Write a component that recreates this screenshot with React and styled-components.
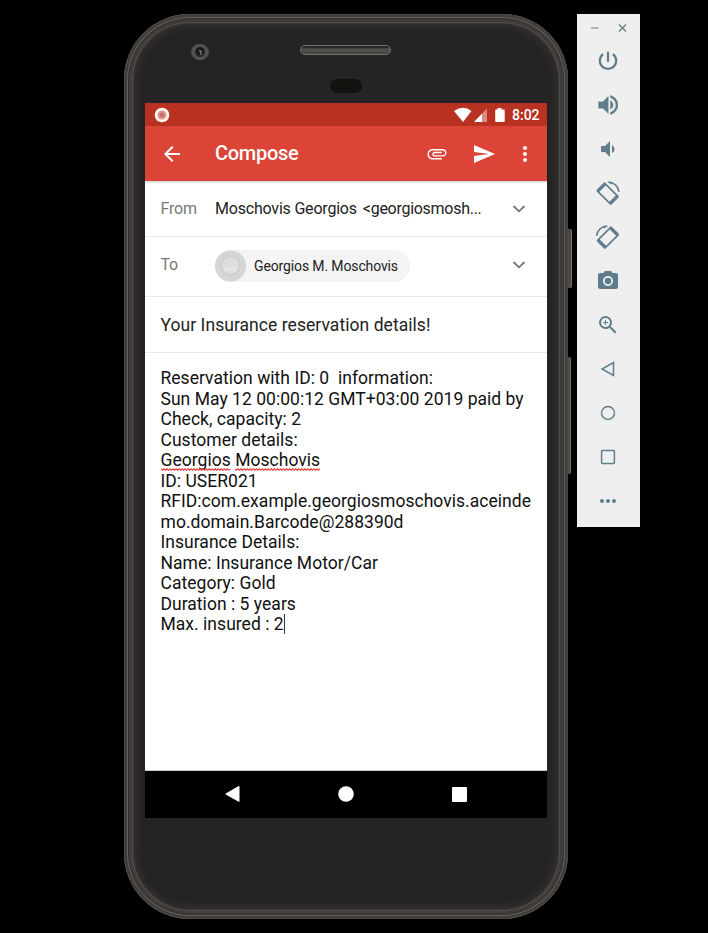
import React from "react";
import styled, { createGlobalStyle } from "styled-components";
import {
  MdVolumeDown,
  MdPhotoCamera,
  MdZoomIn,
  MdArrowBack,
  MdSend,
  MdMoreVert,
  MdMoreHoriz,
} from "react-icons/md";

const GlobalStyle = createGlobalStyle`
  * { box-sizing: border-box; }
  body { margin: 0; background: #000; font-family: Roboto, sans-serif; }
  svg { display: block; flex: none; }
`;

const Desktop = styled.main`
  display: flex;
  align-items: flex-start;
  width: 708px;
  height: 933px;
  padding: 14px 0 0 124px;
  background: #000;
  overflow: hidden;
`;

const Phone = styled.section`
  position: relative;
  display: flex;
  flex-direction: column;
  width: 444px;
  height: 905px;
  padding: 0 21px;
  border-radius: 66px;
  background: #252324;
  box-shadow:
    inset 0 0 0 1px #4a4845,
    inset 0 0 0 3px #3f3c39,
    inset 0 0 0 4px #66625e,
    inset 0 0 0 5px #33302e,
    inset 0 0 0 8px #3f3c3a,
    inset 0 0 0 9px #514e4b,
    inset 0 0 0 10px #383533,
    inset 0 0 8px 12px #353232;
`;

const SideKey = styled.span`
  position: absolute;
  left: ${(p) => p.$left}px;
  top: ${(p) => p.$top}px;
  width: ${(p) => p.$width}px;
  height: ${(p) => p.$height}px;
  border-radius: 0 2px 2px 0;
  background: #4d4b49;
  border-right: 1px solid #777572;
`;

const Bezel = styled.div`
  display: grid;
  grid-template-columns: 110px 181px 111px;
  height: 89px;
`;

const CameraSlot = styled.div`
  display: flex;
  justify-content: center;
  padding-top: 29px;
`;

const SensorColumn = styled.div`
  display: flex;
  flex-direction: column;
  align-items: center;
  gap: 24px;
  padding-top: 31px;
`;

const Speaker = styled.div`
  width: 91px;
  height: 10px;
  border: 1px solid #72706d;
  border-radius: 6px;
  background: linear-gradient(#292722 0 20%, #555350 40%, #454340);
`;

const Sensor = styled.div`
  width: 32px;
  height: 14px;
  border-radius: 7px;
  background: #14120e;
`;

const Screen = styled.div`
  display: flex;
  flex-direction: column;
  width: 402px;
  height: 715px;
  background: #fff;
  color: #222;
`;

const StatusBar = styled.header`
  display: flex;
  align-items: center;
  height: 23px;
  padding: 0 7px 0 9px;
  background: #b93221;
  color: #fff;
`;

const StatusIcons = styled.div`
  display: flex;
  align-items: center;
  margin-left: auto;
`;

const Clock = styled.time`
  width: 28px;
  margin-left: 6px;
  font-size: 14px;
  font-weight: 500;
  line-height: 24px;
  white-space: nowrap;
`;

const AppBar = styled.div`
  position: relative;
  display: flex;
  align-items: center;
  height: 55px;
  padding: 0 10px 0 15px;
  background: #db4437;
  color: #fff;
  box-shadow: 0 1px 2px rgba(0, 0, 0, 0.22);
`;

const Title = styled.h1`
  flex: 1;
  margin: 0 0 0 31px;
  font-size: 20px;
  font-weight: 500;
  line-height: 55px;
  letter-spacing: -0.28px;
`;

const AppActions = styled.div`
  display: flex;
  align-items: center;
`;

const SendSlot = styled.span`
  margin: 0 17px 0 25px;
`;

const Field = styled.div`
  display: flex;
  align-items: flex-start;
  height: ${(p) => p.$height}px;
  padding: ${(p) => p.$top}px 21px 0 15.5px;
  border-bottom: 1px solid #e9e9e9;
`;

const Label = styled.span`
  width: 54.5px;
  color: #777;
  font-size: 16px;
  line-height: 20px;
  letter-spacing: -0.2px;
`;

const Sender = styled.span`
  display: flex;
  flex: 1;
  gap: 6px;
  font-size: 16px;
  line-height: 20px;
  letter-spacing: -0.2px;
  white-space: nowrap;
`;

const Address = styled.span`
  letter-spacing: -0.28px;
`;

const ChipSlot = styled.div`
  flex: 1;
  margin-top: -5px;
`;

const Chip = styled.div`
  display: flex;
  align-items: center;
  gap: 8px;
  width: 195px;
  height: 32px;
  border-radius: 16px;
  background: #f4f4f4;
  font-size: 14px;
  letter-spacing: -0.13px;
  white-space: nowrap;
`;

const Subject = styled.div`
  height: 56px;
  padding: 0 15.5px;
  border-bottom: 1px solid #e9e9e9;
  font-size: 17.5px;
  line-height: 57px;
  letter-spacing: 0.05px;
`;

const Message = styled.div`
  flex: 1;
  padding: 15.3px 0 0 15.5px;
  border-bottom: 1px solid #ccc;
  color: #111;
  font-size: 17.5px;
  letter-spacing: 0.03px;
`;

const Line = styled.div`
  height: 20.53px;
  line-height: 20.53px;
  white-space: pre;
`;

const Misspelled = styled.span`
  position: relative;
`;

const Squiggle = styled.svg`
  position: absolute;
  left: 0;
  top: 18px;
  width: 100%;
  height: 3px;
`;

const Caret = styled.span`
  display: inline-block;
  width: 1px;
  height: 20px;
  background: #333;
  vertical-align: top;
`;

const NavBar = styled.nav`
  display: flex;
  align-items: center;
  justify-content: center;
  gap: 98px;
  height: 47px;
  padding: 0 1px 1px 0;
  background: #000;
`;

const Toolbar = styled.aside`
  width: 63px;
  height: 513px;
  margin-left: 9px;
  background: #efefef;
  color: #607d8b;
`;

const WindowControls = styled.div`
  display: flex;
  justify-content: center;
  padding: 9px 0 0;
  height: 25px;
`;

const Tool = styled.div`
  display: flex;
  align-items: center;
  justify-content: center;
  width: 62px;
  height: 44px;
`;

function FrontCamera() {
  return (
    <svg width="20" height="18" viewBox="0 0 20 18">
      <ellipse cx="10" cy="9" rx="9" ry="8.3" fill="#4f4e50" />
      <circle cx="10" cy="9" r="6.2" fill="#353437" stroke="#68676a" />
      <circle cx="10" cy="8.5" r="4.3" fill="#1b1a1d" />
      <path d="M9 8h1.8v4" stroke="#77757a" strokeWidth="1.4" fill="none" />
    </svg>
  );
}

function Chevron() {
  return (
    <svg width="14" height="20" viewBox="0 -6 14 20">
      <path d="M1.5 1 7 6.3 12.5 1" fill="none" stroke="#757575" strokeWidth="1.8" />
    </svg>
  );
}

function RotateIcon({ flip }) {
  return (
    <svg width="26" height="26" viewBox="0 0 26 26">
      <g transform={flip ? "translate(25.5 0) scale(-1 1)" : undefined} fill="#607d8b">
        <path
          transform="translate(12.6 13.6) rotate(45)"
          fillRule="evenodd"
          d="M-8.9-6.2H8.9Q10.5-6.2 10.5-4.6V4.6Q10.5 6.2 8.9 6.2H-8.9Q-10.5 6.2-10.5 4.6V-4.6Q-10.5-6.2-8.9-6.2ZM-7.1-4.5V4.5H7.1V-4.5Z"
        />
        <path d="M13.5 2.2C18.8 2 23.3 6.2 23.9 11.8" fill="none" stroke="#607d8b" strokeWidth="1.5" />
        <path d="M12.2 2.1 17.2 1.8 16.7 4.4z" />
      </g>
    </svg>
  );
}

function Misspelling({ word, width }) {
  const points = [];
  for (let x = 0; x <= width; x += 1.5) {
    points.push(`${x},${points.length % 2 ? 2.2 : 0.8}`);
  }
  return (
    <Misspelled>
      {word}
      <Squiggle viewBox={`0 0 ${width} 3`} preserveAspectRatio="none">
        <polyline points={points.join(" ")} fill="none" stroke="#e5383b" strokeWidth="1" />
      </Squiggle>
    </Misspelled>
  );
}

const bodyLines = [
  "Reservation with ID: 0  information:",
  "Sun May 12 00:00:12 GMT+03:00 2019 paid by",
  "Check, capacity: 2",
  "Customer details:",
  <><Misspelling word="Georgios" width={70} /> <Misspelling word="Moschovis" width={84} /></>,
  "ID: USER021",
  "RFID:com.example.georgiosmoschovis.aceinde",
  "mo.domain.Barcode@288390d",
  "Insurance Details:",
  "Name: Insurance Motor/Car",
  "Category: Gold",
  "Duration : 5 years",
];

export default function App() {
  return (
    <>
      <GlobalStyle />
      <Desktop>
        <Phone>
          <SideKey $left={443} $top={215} $width={5} $height={59} />
          <SideKey $left={443} $top={343} $width={4} $height={117} />
          <Bezel>
            <CameraSlot><FrontCamera /></CameraSlot>
            <SensorColumn><Speaker /><Sensor /></SensorColumn>
          </Bezel>
          <Screen>
            <StatusBar>
              <svg width="16" height="16" viewBox="0 0 16 16">
                <circle cx="8" cy="8" r="7.3" fill="#fff8f2" />
                <circle cx="8" cy="8" r="4.5" fill="#d8988d" />
                <circle cx="8" cy="8" r="2.4" fill="#c96f69" />
              </svg>
              <StatusIcons>
                <svg width="52" height="16" viewBox="0 0 52 16">
                  <path d="M0 4Q9-2.5 17.5 4L9 15Z" fill="#fff" />
                  <path d="M20 15 33 1.5V15Z" fill="#dc8c82" />
                  <path d="M20 15 28 6.7V15Z" fill="#fff" />
                  <path d="M43.5 1h4v1.5H50q.7 0 .7.7v11q0 .8-.8.8H42q-.8 0-.8-.8v-11q0-.7.8-.7h1.5z" fill="#fff" />
                </svg>
                <Clock>8:02</Clock>
              </StatusIcons>
            </StatusBar>
            <AppBar>
              <MdArrowBack size={24} />
              <Title>Compose</Title>
              <AppActions>
                <svg width="20" height="12" viewBox="1.5 6.3 21 12" fill="#fff">
                  <path d="M2 12.5C2 9.46 4.46 7 7.5 7H18c2.21 0 4 1.79 4 4s-1.79 4-4 4H9.5C8.12 15 7 13.88 7 12.5S8.12 10 9.5 10H17v1.5H9.4c-.55 0-.9.45-.9 1s.35 1 .9 1H18c1.38 0 2.5-1.12 2.5-2.5S19.38 8.5 18 8.5H7.5c-2.21 0-4 1.79-4 4s1.79 4 4 4H17V18H7.5C4.46 18 2 15.54 2 12.5z" />
                </svg>
                <SendSlot><MdSend size={24} /></SendSlot>
                <MdMoreVert size={24} />
              </AppActions>
            </AppBar>
            <Field $height={56} $top={18}>
              <Label>From</Label>
              <Sender><span>Moschovis Georgios</span><Address>&lt;georgiosmosh...</Address></Sender>
              <Chevron />
            </Field>
            <Field $height={60} $top={18}>
              <Label>To</Label>
              <ChipSlot>
                <Chip>
                  <svg width="31" height="32" viewBox="0 0 31 32">
                    <circle cx="15.5" cy="16" r="15.5" fill="#d5d5d5" />
                    <circle cx="15.5" cy="15.5" r="9" fill="#dedede" stroke="#cbcbcb" />
                    <path d="M10 16q5.5 6 11 0v5H10z" fill="#e5e5e5" />
                  </svg>
                  Georgios M. Moschovis
                </Chip>
              </ChipSlot>
              <Chevron />
            </Field>
            <Subject>Your Insurance reservation details!</Subject>
            <Message>
              {bodyLines.map((text, i) => (
                <Line key={i}>{text}</Line>
              ))}
              <Line>Max. insured : 2<Caret /></Line>
            </Message>
            <NavBar>
              <svg width="15" height="16" viewBox="0 0 15 16"><path d="M13.2.3Q14.5-.3 14.5 1v14q0 1.3-1.3.6L.8 8.6q-1-.6 0-1.2z" fill="#fff" /></svg>
              <svg width="16" height="16" viewBox="0 0 16 16"><circle cx="8" cy="8" r="7.8" fill="#fff" /></svg>
              <svg width="15" height="15" viewBox="0 0 15 15"><rect width="15" height="15" rx="1" fill="#fff" /></svg>
            </NavBar>
          </Screen>
        </Phone>
        <Toolbar>
          <WindowControls>
            <svg width="36" height="10" viewBox="0 0 36 10">
              <path d="M0 5h7.5" stroke="#9aa5a9" strokeWidth="1.5" />
              <path d="m28 1.5 7 7m0-7-7 7" stroke="#718087" strokeWidth="1.5" />
            </svg>
          </WindowControls>
          <Tool>
            <svg width="24" height="24" viewBox="0 0 24 24" fill="none" stroke="currentColor" strokeWidth="2.3">
              <path d="M12 2.8v10M7.1 5.2a8.2 8.2 0 1 0 9.8 0" />
            </svg>
          </Tool>
          <Tool>
            <svg width="20" height="20" viewBox="2.5 2.8 18.5 18.5" fill="currentColor" stroke="currentColor" strokeWidth=".3">
              <path d="M3 9v6h4l5 5V4L7 9H3zm13.5 3c0-1.77-1.02-3.29-2.5-4.03v8.05c1.48-.73 2.5-2.25 2.5-4.02zM14 3.23v2.06c2.89.86 5 3.54 5 6.71s-2.11 5.85-5 6.71v2.06c4.01-.91 7-4.49 7-8.77s-2.99-7.86-7-8.77z" />
            </svg>
          </Tool>
          <Tool><MdVolumeDown size={24} /></Tool>
          <Tool><RotateIcon /></Tool>
          <Tool><RotateIcon flip /></Tool>
          <Tool><MdPhotoCamera size={24} /></Tool>
          <Tool><MdZoomIn size={24} /></Tool>
          <Tool><svg width="16" height="18" viewBox="0 0 16 18"><path d="M13.5 2.5v13L2 9z" fill="none" stroke="currentColor" strokeWidth="1.5" /></svg></Tool>
          <Tool><svg width="16" height="16" viewBox="0 0 16 16"><circle cx="8" cy="8" r="6.5" fill="none" stroke="currentColor" strokeWidth="1.4" /></svg></Tool>
          <Tool><svg width="16" height="16" viewBox="0 0 16 16"><rect x="1.6" y="1.6" width="12.8" height="12.8" rx=".7" fill="none" stroke="currentColor" strokeWidth="1.5" /></svg></Tool>
          <Tool><MdMoreHoriz size={24} /></Tool>
        </Toolbar>
      </Desktop>
    </>
  );
}
